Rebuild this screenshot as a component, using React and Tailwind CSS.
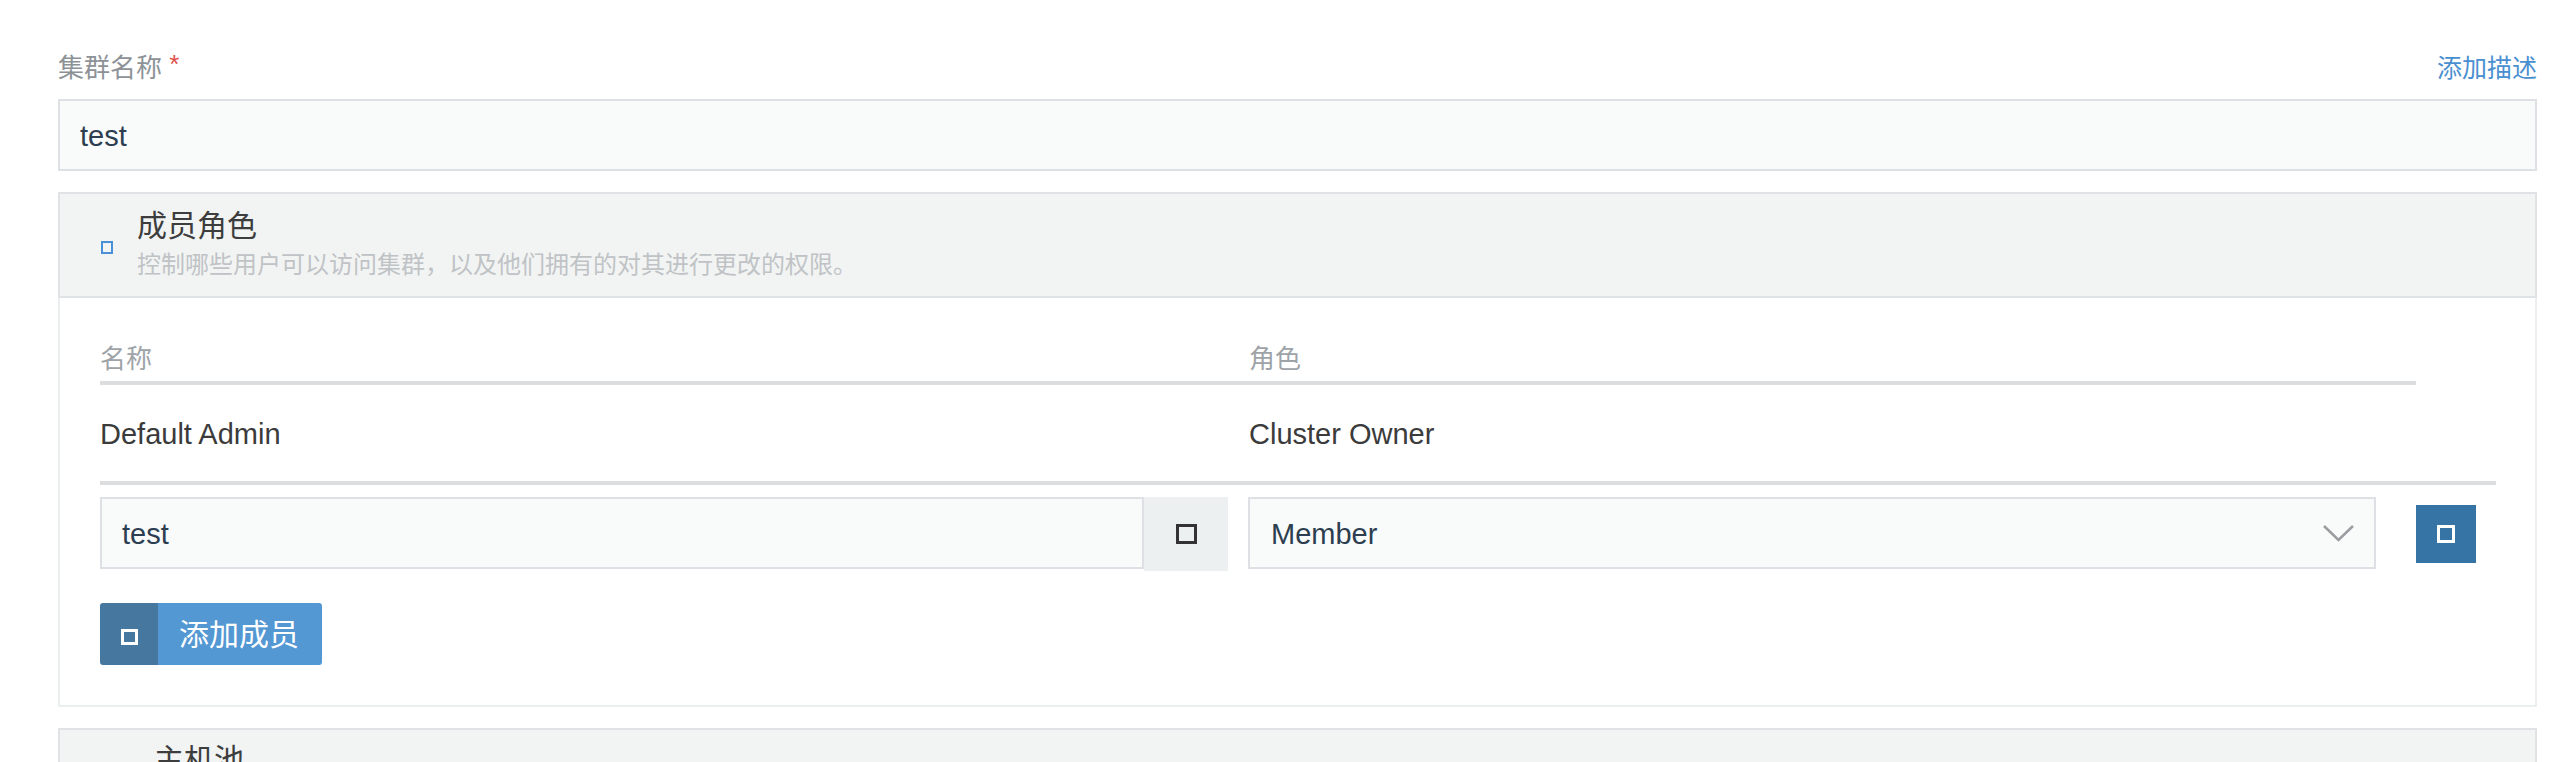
import React from "react";

const font = "font-['Liberation_Sans','Noto_Sans_CJK_SC',sans-serif]";

// placeholder glyph for the missing icon font
const Box = ({ className }) => <span className={`block ${className}`} />;

const Chevron = () => (
  <svg width="31" height="17" viewBox="0 0 31 17" fill="none">
    <polyline points="1,1 15.5,15 30,1" stroke="#9a9ea2" strokeWidth="2.5" />
  </svg>
);

const members = [{ name: "Default Admin", role: "Cluster Owner" }];

const App = () => {
  return (
    <div className={`${font} bg-white min-h-[762px] pl-[58px] pr-[39px] pt-[48px] overflow-hidden`}>
      {/* cluster name */}
      <div className="flex justify-between h-[40px] leading-[40px] mb-[11px]">
        <div className="text-[26px] text-[#8d9297]">
          集群名称 <span className="text-[#e0504a] relative top-[-4px]">*</span>
        </div>
        <a className="text-[25px] text-[#4a8fd0]">添加描述</a>
      </div>
      <div className="h-[72px] border-2 border-[#dde1e5] bg-[#f9fbfa] px-[20px] pt-[3px] flex items-center text-[29px] text-[#2d3e50]">
        test
      </div>

      {/* members section */}
      <div className="mt-[21px]">
        <div className="h-[106px] border-2 border-[#dfe3e5] bg-[#f2f4f3] flex pl-[41px]">
          <Box className="w-[12px] h-[13px] border-2 border-[#4a90d9] mt-[47px]" />
          <div className="ml-[24px] pt-[15px]">
            <div className="text-[30px] leading-[34px] text-[#3d3d3d]">成员角色</div>
            <div className="text-[24px] leading-[28px] mt-[8px] text-[#c0c3c6]">
              控制哪些用户可以访问集群，以及他们拥有的对其进行更改的权限。
            </div>
          </div>
        </div>

        <div className="border-2 border-t-0 border-[#eceff0] pl-[40px] pr-[39px] pt-[44px] pb-[40px]">
          <div className="flex mr-[80px] border-b-4 border-[#dcdddf] pb-[5px] text-[26px] leading-[34px] text-[#9ea3a8]">
            <div className="w-[1149px]">名称</div>
            <div>角色</div>
          </div>

          {members.map((m) => (
            <div
              key={m.name}
              className="flex border-b-4 border-[#dcdddf] pt-[32px] pb-[30px] text-[29px] leading-[34px] text-[#3b3b3b]"
            >
              <div className="w-[1149px]">{m.name}</div>
              <div>{m.role}</div>
            </div>
          ))}

          <div className="flex items-start mt-[12px]">
            <div className="w-[1044px] h-[72px] border-2 border-[#dde1e5] bg-[#f9fbfa] px-[20px] pt-[3px] flex items-center text-[29px] text-[#2d3e50]">
              test
            </div>
            <div className="w-[84px] h-[74px] bg-[#edf0f1] flex items-center justify-center">
              <Box className="w-[21px] h-[20px] border-[3px] border-[#333333]" />
            </div>
            <div className="ml-[20px] w-[1128px] h-[72px] border-2 border-[#dde1e5] bg-[#f9fbfa] pl-[21px] pr-[20px] flex items-center justify-between text-[29px] text-[#2d3e50]">
              <span className="pt-[3px]">Member</span>
              <Chevron />
            </div>
            <button className="ml-[40px] mt-[8px] w-[60px] h-[58px] bg-[#3574a4] flex items-center justify-center">
              <Box className="w-[18px] h-[18px] border-[3px] border-white" />
            </button>
          </div>

          <button className="mt-[32px] h-[62px] w-[222px] rounded-[3px] overflow-hidden flex">
            <span className="w-[58px] h-full bg-[#46779f] flex items-center justify-center">
              <Box className="w-[17px] h-[16px] border-[3px] border-white mt-[5px]" />
            </span>
            <span className="flex-1 h-full bg-[#5397d3] text-white text-[30px] flex items-center pl-[21px]">
              添加成员
            </span>
          </button>
        </div>
      </div>

      {/* host pool section */}
      <div className="mt-[21px] h-[106px] border-2 border-[#dfe3e5] bg-[#f2f4f3] pl-[94px] pt-[13px]">
        <div className="text-[30px] leading-[34px] text-[#3d3d3d]">主机池</div>
      </div>
    </div>
  );
};

export default App;
